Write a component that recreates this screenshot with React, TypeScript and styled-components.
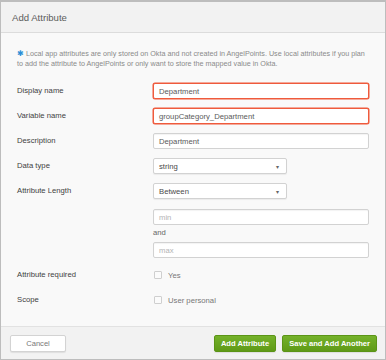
import styled, { createGlobalStyle } from 'styled-components';

const Global = createGlobalStyle`
  html, body {
    margin: 0;
    padding: 0;
    background: #ffffff;
  }
  * {
    box-sizing: border-box;
  }
`;

export default function App() {
  return (
    <>
      <Global />
      <Dialog>
        <Header>
          <Title>Add Attribute</Title>
        </Header>

        <Body>
          <Info>
            <Line>
              <Star>✱</Star> Local app attributes are only stored on Okta and not created in AngelPoints. Use local attributes if you plan
            </Line>
            <Line>to add the attribute to AngelPoints or only want to store the mapped value in Okta.</Line>
          </Info>

          <Form>
            <Label>Display name</Label>
            <Input $highlight>Department</Input>

            <Label>Variable name</Label>
            <Input $highlight>groupCategory_Department</Input>

            <Label>Description</Label>
            <Input>Department</Input>

            <Label>Data type</Label>
            <Select>
              string
              <Caret>▾</Caret>
            </Select>

            <Label>Attribute Length</Label>
            <Stack>
              <Select>
                Between
                <Caret>▾</Caret>
              </Select>
              <Input $placeholder>min</Input>
              <And>and</And>
              <Input $placeholder>max</Input>
            </Stack>

            <Label>Attribute required</Label>
            <Check>
              <Box />
              Yes
            </Check>

            <Label>Scope</Label>
            <Check>
              <Box />
              User personal
            </Check>
          </Form>
        </Body>

        <Footer>
          <Button>Cancel</Button>
          <Actions>
            <Button $primary>Add Attribute</Button>
            <Button $primary>Save and Add Another</Button>
          </Actions>
        </Footer>
      </Dialog>
    </>
  );
}

const Dialog = styled.div`
  width: 386px;
  height: 360px;
  border: 1px solid #bdbdbd;
  border-top-width: 2px;
  display: flex;
  flex-direction: column;
  background: #f9f9f9;
  font-family: 'Liberation Sans', Arial, sans-serif;
  overflow: hidden;
`;

const Header = styled.div`
  height: 31px;
  background: #f2f2f2;
  border-bottom: 1px solid #dcdcdc;
  display: flex;
  align-items: center;
  padding-left: 11px;
  flex-shrink: 0;
`;

const Title = styled.div`
  font-size: 9.6px;
  color: #5c5c5c;
`;

const Body = styled.div`
  flex: 1;
  padding: 16px 16px 0 16px;
`;

const Info = styled.div`
  font-size: 7.2px;
  line-height: 10px;
  color: #8a8a8a;
  margin-bottom: 14px;
`;

const Line = styled.div`
  white-space: nowrap;
`;

const Star = styled.span`
  color: #2b8fd6;
  font-size: 7.5px;
`;

const Form = styled.div`
  display: grid;
  grid-template-columns: 136px 216px;
  row-gap: 9px;
  align-items: start;
`;

const Label = styled.div`
  height: 16px;
  line-height: 16px;
  font-size: 7.7px;
  color: #3f3f3f;
`;

const Input = styled.div<{ $highlight?: boolean; $placeholder?: boolean }>`
  height: 16px;
  width: 216px;
  background: #ffffff;
  border: 1px solid ${(p) => (p.$highlight ? '#ef5a3c' : '#d2d2d2')};
  box-shadow: ${(p) => (p.$highlight ? '0 0 0 0.5px #ef5a3c' : 'inset 0 1px 1px rgba(0,0,0,0.05)')};
  border-radius: 2px;
  padding-left: 5px;
  display: flex;
  align-items: center;
  font-size: 7.7px;
  color: ${(p) => (p.$placeholder ? '#b4b4b4' : '#5a5a5a')};
`;

const Select = styled.div`
  height: 16px;
  width: 134px;
  background: #ffffff;
  border: 1px solid #d2d2d2;
  border-radius: 2px;
  box-shadow: 0 1px 1px rgba(0, 0, 0, 0.06);
  padding: 0 7px 0 5px;
  display: flex;
  align-items: center;
  justify-content: space-between;
  font-size: 7.7px;
  color: #4a4a4a;
`;

const Caret = styled.span`
  font-size: 6px;
  color: #666;
`;

const Stack = styled.div`
  display: flex;
  flex-direction: column;
  gap: 10px;
`;

const And = styled.div`
  height: 10px;
  line-height: 10px;
  margin: -7px 0 -6px;
  font-size: 7.7px;
  color: #666;
`;

const Check = styled.div`
  height: 16px;
  display: flex;
  align-items: center;
  gap: 6px;
  font-size: 7.7px;
  color: #777;
  padding-left: 1px;
`;

const Box = styled.span`
  width: 8px;
  height: 8px;
  border: 1px solid #cfcfcf;
  border-radius: 1px;
  background: #fbfbfb;
`;

const Footer = styled.div`
  height: 33px;
  flex-shrink: 0;
  background: #f2f2f2;
  border-top: 1px solid #e2e2e2;
  display: flex;
  align-items: center;
  justify-content: space-between;
  padding: 0 8px 0 9px;
`;

const Actions = styled.div`
  display: flex;
  gap: 6px;
`;

const Button = styled.div<{ $primary?: boolean }>`
  height: 17px;
  padding: 0 ${(p) => (p.$primary ? '6px' : '0')};
  min-width: 56px;
  display: flex;
  align-items: center;
  justify-content: center;
  border-radius: 2px;
  font-size: 7.6px;
  font-weight: ${(p) => (p.$primary ? 'bold' : 'normal')};
  color: ${(p) => (p.$primary ? '#ffffff' : '#777777')};
  background: ${(p) => (p.$primary ? 'linear-gradient(#74b12a, #5f9a17)' : '#ffffff')};
  border: 1px solid ${(p) => (p.$primary ? '#5b9416' : '#d3d3d3')};
  box-shadow: 0 1px 1px rgba(0, 0, 0, 0.08);
`;
